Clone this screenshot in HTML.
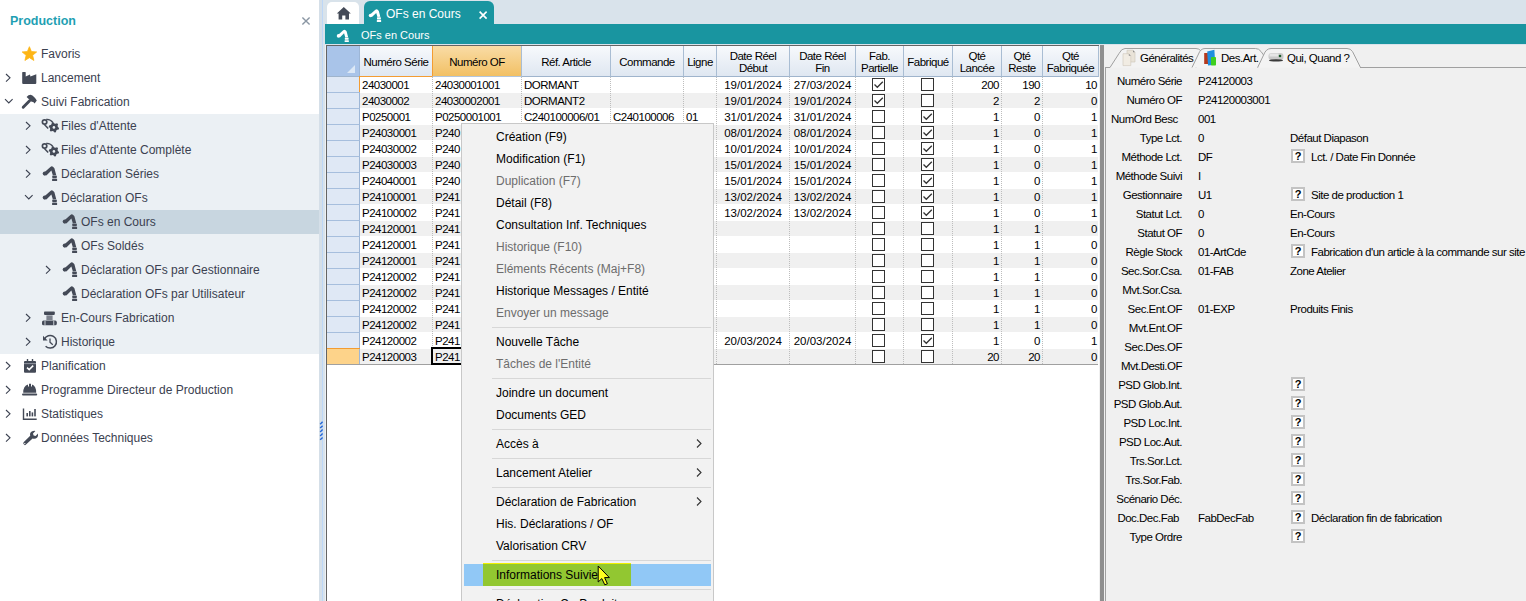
<!DOCTYPE html><html><head><meta charset="utf-8"><style>
*{box-sizing:border-box;margin:0;padding:0}
html,body{width:1526px;height:601px;overflow:hidden;background:#fff;position:relative;font-family:"Liberation Sans",sans-serif}
.abs{position:absolute}
.sb{position:absolute;left:0;top:0;width:319px;height:601px;background:#fff}
.sbt{position:absolute;left:10px;top:14px;font:bold 12.5px "Liberation Sans",sans-serif;color:#1f9fb3}
.it{position:absolute;height:24px;line-height:24px;font-size:12px;color:#3b4150;white-space:nowrap}
.chev{position:absolute;width:6px;height:6px;border-right:1.5px solid #3b4150;border-bottom:1.5px solid #3b4150}
.ico{position:absolute}
.g{position:absolute;font-size:11.5px;letter-spacing:-0.5px;color:#000;white-space:nowrap;line-height:16px}
.hd{position:absolute;top:46px;height:31px;background:linear-gradient(#f7f9fc,#dfe7f1);border-right:1px solid #a9bdd3;border-bottom:1px solid #9fb4cc;font-size:11.5px;letter-spacing:-0.5px;color:#000;text-align:center;display:flex;align-items:center;justify-content:center;line-height:12px;padding-top:1px}
.mi{position:absolute;left:496px;font-size:12px;color:#000;white-space:nowrap;line-height:16px}
.mi.d{color:#6d6d6d}
.sep{position:absolute;left:492px;width:219px;height:1px;background:#d7d7d7}
.fl{position:absolute;font-size:11.5px;letter-spacing:-0.5px;color:#000;white-space:nowrap;line-height:14px}
.q{position:absolute;width:14px;height:14px;border:2px solid #c3c3c3;background:#fff;font:bold 11px "Liberation Sans",sans-serif;text-align:center;line-height:10px;color:#000}
</style></head><body>
<div class="sb">
<div class="sbt">Production</div>
<svg class="abs" style="left:300px;top:15px" width="12" height="12"><path d="M2.4 2.4 L9.6 9.6 M9.6 2.4 L2.4 9.6" stroke="#8a96a3" stroke-width="1.4"/></svg>
<div class="abs" style="left:0;top:114px;width:319px;height:240px;background:#ebf0f4"></div>
<div class="abs" style="left:0;top:210px;width:319px;height:24px;background:#c8d6e0"></div>
<div class="it" style="left:41px;top:42px">Favoris</div>
<div class="it" style="left:41px;top:66px">Lancement</div>
<div class="it" style="left:41px;top:90px">Suivi Fabrication</div>
<div class="it" style="left:61px;top:114px">Files d'Attente</div>
<div class="it" style="left:61px;top:138px">Files d'Attente Complète</div>
<div class="it" style="left:61px;top:162px">Déclaration Séries</div>
<div class="it" style="left:61px;top:186px">Déclaration OFs</div>
<div class="it" style="left:81px;top:210px">OFs en Cours</div>
<div class="it" style="left:81px;top:234px">OFs Soldés</div>
<div class="it" style="left:81px;top:258px">Déclaration OFs par Gestionnaire</div>
<div class="it" style="left:81px;top:282px">Déclaration OFs par Utilisateur</div>
<div class="it" style="left:61px;top:306px">En-Cours Fabrication</div>
<div class="it" style="left:61px;top:330px">Historique</div>
<div class="it" style="left:41px;top:354px">Planification</div>
<div class="it" style="left:41px;top:378px">Programme Directeur de Production</div>
<div class="it" style="left:41px;top:402px">Statistiques</div>
<div class="it" style="left:41px;top:426px">Données Techniques</div>
</div>
<svg class="abs" style="left:0;top:0" width="319" height="601"><polygon points="29.40,46.70 31.40,51.55 36.63,51.95 32.63,55.35 33.87,60.45 29.40,57.70 24.93,60.45 26.17,55.35 22.17,51.95 27.40,51.55" fill="#fdb515" stroke="#fdb515" stroke-width="0.8" stroke-linejoin="round"/><path d="M22.2 72.6 Q22.2 72 22.8 72 L25.2 72 Q25.7 72 25.7 72.6 L25.7 76.6 L30 74.6 L30.4 76.6 L36.3 74.2 L36.3 83 Q36.3 84.1 35.2 84.1 L23.3 84.1 Q22.2 84.1 22.2 83 Z" fill="#444a57"/><line x1="23.2" y1="107.2" x2="29.6" y2="100.8" stroke="#444a57" stroke-width="2.9" stroke-linecap="round"/><path d="M26.6 96.9 Q28.6 94.6 31.2 94.9 Q33.6 95.6 36.8 100.4 L34.6 103.4 L33.2 102 L31.6 101.8 L28.2 98.6 Z" fill="#444a57"/><g transform="translate(0,0)"><circle cx="44.6" cy="122" r="2.2" fill="none" stroke="#444a57" stroke-width="1.7"/><path d="M46.2 119.4 Q50.4 119 53 122.6" fill="none" stroke="#444a57" stroke-width="1.4"/><line x1="44.4" y1="124.4" x2="48.2" y2="128.4" stroke="#444a57" stroke-width="1.5"/><polygon points="59.06,128.08 58.70,129.39 57.07,129.84 56.34,130.57 55.89,132.20 54.58,132.56 53.38,131.37 52.37,131.10 50.73,131.53 49.77,130.57 50.20,128.93 49.93,127.92 48.74,126.72 49.10,125.41 50.73,124.96 51.46,124.23 51.91,122.60 53.22,122.24 54.42,123.43 55.43,123.70 57.07,123.27 58.03,124.23 57.60,125.87 57.87,126.88" fill="#444a57"/><circle cx="53.9" cy="127.4" r="1.3" fill="#ebf0f4"/></g><g transform="translate(0,24)"><circle cx="44.6" cy="122" r="2.2" fill="none" stroke="#444a57" stroke-width="1.7"/><path d="M46.2 119.4 Q50.4 119 53 122.6" fill="none" stroke="#444a57" stroke-width="1.4"/><line x1="44.4" y1="124.4" x2="48.2" y2="128.4" stroke="#444a57" stroke-width="1.5"/><polygon points="59.06,128.08 58.70,129.39 57.07,129.84 56.34,130.57 55.89,132.20 54.58,132.56 53.38,131.37 52.37,131.10 50.73,131.53 49.77,130.57 50.20,128.93 49.93,127.92 48.74,126.72 49.10,125.41 50.73,124.96 51.46,124.23 51.91,122.60 53.22,122.24 54.42,123.43 55.43,123.70 57.07,123.27 58.03,124.23 57.60,125.87 57.87,126.88" fill="#444a57"/><circle cx="53.9" cy="127.4" r="1.3" fill="#ebf0f4"/></g><g transform="translate(43,166)" fill="#444a57" stroke="none">
<circle cx="1.8" cy="7.6" r="2.1"/>
<path d="M1.2 6.4 L7.4 0.9 Q8.8 -0.2 10.2 0.9 L11.4 2.2 L13.2 9 L9.8 9.2 L8.4 4.6 L3.4 9.4 Z"/>
<rect x="9.3" y="9.6" width="4.5" height="2.6" rx="0.6"/>
<rect x="9.1" y="12.8" width="5" height="2.2" rx="0.3"/>
</g><g transform="translate(43,190)" fill="#444a57" stroke="none">
<circle cx="1.8" cy="7.6" r="2.1"/>
<path d="M1.2 6.4 L7.4 0.9 Q8.8 -0.2 10.2 0.9 L11.4 2.2 L13.2 9 L9.8 9.2 L8.4 4.6 L3.4 9.4 Z"/>
<rect x="9.3" y="9.6" width="4.5" height="2.6" rx="0.6"/>
<rect x="9.1" y="12.8" width="5" height="2.2" rx="0.3"/>
</g><g transform="translate(63,214)" fill="#444a57" stroke="none">
<circle cx="1.8" cy="7.6" r="2.1"/>
<path d="M1.2 6.4 L7.4 0.9 Q8.8 -0.2 10.2 0.9 L11.4 2.2 L13.2 9 L9.8 9.2 L8.4 4.6 L3.4 9.4 Z"/>
<rect x="9.3" y="9.6" width="4.5" height="2.6" rx="0.6"/>
<rect x="9.1" y="12.8" width="5" height="2.2" rx="0.3"/>
</g><g transform="translate(63,238)" fill="#444a57" stroke="none">
<circle cx="1.8" cy="7.6" r="2.1"/>
<path d="M1.2 6.4 L7.4 0.9 Q8.8 -0.2 10.2 0.9 L11.4 2.2 L13.2 9 L9.8 9.2 L8.4 4.6 L3.4 9.4 Z"/>
<rect x="9.3" y="9.6" width="4.5" height="2.6" rx="0.6"/>
<rect x="9.1" y="12.8" width="5" height="2.2" rx="0.3"/>
</g><g transform="translate(63,262)" fill="#444a57" stroke="none">
<circle cx="1.8" cy="7.6" r="2.1"/>
<path d="M1.2 6.4 L7.4 0.9 Q8.8 -0.2 10.2 0.9 L11.4 2.2 L13.2 9 L9.8 9.2 L8.4 4.6 L3.4 9.4 Z"/>
<rect x="9.3" y="9.6" width="4.5" height="2.6" rx="0.6"/>
<rect x="9.1" y="12.8" width="5" height="2.2" rx="0.3"/>
</g><g transform="translate(63,286)" fill="#444a57" stroke="none">
<circle cx="1.8" cy="7.6" r="2.1"/>
<path d="M1.2 6.4 L7.4 0.9 Q8.8 -0.2 10.2 0.9 L11.4 2.2 L13.2 9 L9.8 9.2 L8.4 4.6 L3.4 9.4 Z"/>
<rect x="9.3" y="9.6" width="4.5" height="2.6" rx="0.6"/>
<rect x="9.1" y="12.8" width="5" height="2.2" rx="0.3"/>
</g><rect x="44" y="311.6" width="10.8" height="3.3" rx="0.8" fill="#444a57"/><rect x="46.4" y="315.4" width="6.2" height="4.6" fill="#7d828d"/><rect x="42" y="320.6" width="14.8" height="4.7" rx="1.6" fill="#444a57"/><rect x="44.6" y="320.6" width="0.8" height="4.7" fill="#ebf0f4"/><rect x="53.4" y="320.6" width="0.8" height="4.7" fill="#ebf0f4"/><path d="M44.4 339.2 A6.3 6.3 0 1 1 45.6 346.2" fill="none" stroke="#444a57" stroke-width="1.5"/><polygon points="43,335.8 43,340.6 47.6,340.6" fill="#444a57"/><path d="M50 338.5 L50 342.2 L52.8 344.8" fill="none" stroke="#444a57" stroke-width="1.3"/><rect x="24" y="361" width="12" height="11.8" rx="1" fill="#444a57"/><rect x="26.8" y="359" width="1.4" height="3" fill="#444a57"/><rect x="31.8" y="359" width="1.4" height="3" fill="#444a57"/><rect x="24" y="363.2" width="12" height="0.9" fill="#9ba0aa"/><path d="M27 367.6 L29.2 369.6 L33.2 365.6" fill="none" stroke="#fff" stroke-width="1.5"/><path d="M23.2 392.8 Q23.2 385.5 28 384.4 L28 386.5 L29 386.5 L29 383.8 L31 383.8 L31 386.5 L32 386.5 L32 384.4 Q36.2 385.5 36.2 392.8 Z" fill="#444a57"/><rect x="22" y="393.6" width="15.2" height="2" rx="1" fill="#444a57"/><path d="M23.5 408.4 L23.5 419.3 L36.7 419.3" fill="none" stroke="#444a57" stroke-width="1.4"/><rect x="26.4" y="413" width="1.6" height="3.4" fill="#444a57"/><rect x="29" y="411" width="1.6" height="5.4" fill="#444a57"/><rect x="31.6" y="412.4" width="1.6" height="4" fill="#444a57"/><rect x="34.2" y="409" width="1.6" height="7.4" fill="#444a57"/><path d="M24.2 444.8 Q22.6 443.6 23.6 442.2 L30.2 435.8 Q29.4 432.4 32.2 431.2 Q34 430.6 35.4 431 L33 433.4 L33.6 435.4 L35.6 436 L38 433.6 Q38.4 436 37.2 437.4 Q35.4 439.2 32.6 438.4 L26 444.6 Q25 445.6 24.2 444.8 Z" fill="#444a57"/><circle cx="24.8" cy="443.6" r="0.7" fill="#fff"/><path d="M6 74 L10 77.8 L6 81.6" fill="none" stroke="#3b4150" stroke-width="1.1"/><path d="M5 99.2 L8.8 103 L12.6 99.2" fill="none" stroke="#3b4150" stroke-width="1.1"/><path d="M26 122 L30 125.8 L26 129.6" fill="none" stroke="#3b4150" stroke-width="1.1"/><path d="M26 146 L30 149.8 L26 153.6" fill="none" stroke="#3b4150" stroke-width="1.1"/><path d="M26 170 L30 173.8 L26 177.6" fill="none" stroke="#3b4150" stroke-width="1.1"/><path d="M25 195.2 L28.8 199 L32.6 195.2" fill="none" stroke="#3b4150" stroke-width="1.1"/><path d="M46 266 L50 269.8 L46 273.6" fill="none" stroke="#3b4150" stroke-width="1.1"/><path d="M26 314 L30 317.8 L26 321.6" fill="none" stroke="#3b4150" stroke-width="1.1"/><path d="M26 338 L30 341.8 L26 345.6" fill="none" stroke="#3b4150" stroke-width="1.1"/><path d="M6 362 L10 365.8 L6 369.6" fill="none" stroke="#3b4150" stroke-width="1.1"/><path d="M6 386 L10 389.8 L6 393.6" fill="none" stroke="#3b4150" stroke-width="1.1"/><path d="M6 410 L10 413.8 L6 417.6" fill="none" stroke="#3b4150" stroke-width="1.1"/><path d="M6 434 L10 437.8 L6 441.6" fill="none" stroke="#3b4150" stroke-width="1.1"/></svg>
<div class="abs" style="left:319px;top:0;width:3px;height:601px;background:#d5dfe8"></div>
<div class="abs" style="left:322px;top:0;width:1px;height:601px;background:#bdd7f7"></div>
<div class="abs" style="left:323px;top:0;width:1203px;height:601px;background:#d9e3eb"></div>
<svg class="abs" style="left:318px;top:418px" width="6" height="26"><path d="M2.2 6.2 L4.6 3.8" stroke="#2266d8" stroke-width="1.4"/><path d="M2.2 10.1 L4.6 7.699999999999999" stroke="#2266d8" stroke-width="1.4"/><path d="M2.2 14.0 L4.6 11.6" stroke="#2266d8" stroke-width="1.4"/><path d="M2.2 17.9 L4.6 15.5" stroke="#2266d8" stroke-width="1.4"/><path d="M2.2 21.8 L4.6 19.4" stroke="#2266d8" stroke-width="1.4"/></svg>
<div class="abs" style="left:327px;top:2px;width:32px;height:22px;background:#fff;border-radius:5px 5px 0 0"></div>
<div class="abs" style="left:364px;top:1px;width:130px;height:23px;background:#1995a0;border-radius:6px 6px 0 0"></div>
<div class="abs" style="left:386px;top:6px;font-size:12px;color:#fff;line-height:16px">OFs en Cours</div>
<div class="abs" style="left:325px;top:24px;width:1201px;height:20px;background:#1995a0"></div>
<div class="abs" style="left:361px;top:28px;font-size:11px;color:#fff;line-height:14px">OFs en Cours</div>
<svg class="abs" style="left:0;top:0" width="520" height="50"><path d="M479.6 11.6 L486.6 18.6 M486.6 11.6 L479.6 18.6" stroke="#fff" stroke-width="1.6"/><path d="M343.8 7 L350.8 13.4 L349 13.4 L349 19.4 L345.4 19.4 L345.4 15.6 L342.2 15.6 L342.2 19.4 L338.6 19.4 L338.6 13.4 L336.8 13.4 Z" fill="#444a57"/><g transform="translate(369,9) scale(0.86)"><g transform="translate(0,0)" fill="#fff" stroke="none">
<circle cx="1.8" cy="7.6" r="2.1"/>
<path d="M1.2 6.4 L7.4 0.9 Q8.8 -0.2 10.2 0.9 L11.4 2.2 L13.2 9 L9.8 9.2 L8.4 4.6 L3.4 9.4 Z"/>
<rect x="9.3" y="9.6" width="4.5" height="2.6" rx="0.6"/>
<rect x="9.1" y="12.8" width="5" height="2.2" rx="0.3"/>
</g></g><g transform="translate(337,29.5) scale(0.84)"><g transform="translate(0,0)" fill="#fff" stroke="none">
<circle cx="1.8" cy="7.6" r="2.1"/>
<path d="M1.2 6.4 L7.4 0.9 Q8.8 -0.2 10.2 0.9 L11.4 2.2 L13.2 9 L9.8 9.2 L8.4 4.6 L3.4 9.4 Z"/>
<rect x="9.3" y="9.6" width="4.5" height="2.6" rx="0.6"/>
<rect x="9.1" y="12.8" width="5" height="2.2" rx="0.3"/>
</g></g></svg>
<div class="abs" style="left:325px;top:45px;width:1px;height:556px;background:#eef1f4"></div>
<div class="abs" style="left:326px;top:45px;width:774px;height:556px;background:#fff;border:1px solid #646464;border-bottom:none"></div>
<div class="abs" style="left:327px;top:46px;width:33px;height:31px;background:#a9c4e9;border-right:1px solid #9db6d6;border-bottom:1px solid #9fb4cc"></div>
<div class="abs" style="left:347px;top:65px;width:0;height:0;border-left:8px solid transparent;border-bottom:8px solid #dce8f6"></div>
<div class="hd" style="left:360px;width:73px;">Numéro Série</div>
<div class="hd" style="left:432px;width:90px;background:linear-gradient(#f9dca6,#f2c064);border-right:1px solid #a9bdd3;border-left:1px solid #f39c32;border-bottom:1px solid #b3c6dc">Numéro OF</div>
<div class="hd" style="left:522px;width:89px;">Réf. Article</div>
<div class="hd" style="left:611px;width:73px;">Commande</div>
<div class="hd" style="left:684px;width:33px;">Ligne</div>
<div class="hd" style="left:717px;width:73px;">Date Réel<br>Début</div>
<div class="hd" style="left:790px;width:66px;">Date Réel<br>Fin</div>
<div class="hd" style="left:856px;width:48px;">Fab.<br>Partielle</div>
<div class="hd" style="left:904px;width:49px;">Fabriqué</div>
<div class="hd" style="left:953px;width:49px;">Qté<br>Lancée</div>
<div class="hd" style="left:1002px;width:41px;">Qté<br>Reste</div>
<div class="hd" style="left:1043px;width:56px;">Qté<br>Fabriquée</div>
<div class="abs" style="left:360px;top:77px;width:738px;height:15px;background:#fff"></div>
<div class="abs" style="left:327px;top:77px;width:33px;height:16px;background:#dfe8f5;border-right:1px solid #9db6d6;border-bottom:1px solid #a6bedd"></div>
<div class="abs" style="left:360px;top:93px;width:738px;height:15px;background:#f0f0f0"></div>
<div class="abs" style="left:327px;top:93px;width:33px;height:16px;background:#dfe8f5;border-right:1px solid #9db6d6;border-bottom:1px solid #a6bedd"></div>
<div class="abs" style="left:360px;top:109px;width:738px;height:15px;background:#fff"></div>
<div class="abs" style="left:327px;top:109px;width:33px;height:16px;background:#dfe8f5;border-right:1px solid #9db6d6;border-bottom:1px solid #a6bedd"></div>
<div class="abs" style="left:360px;top:125px;width:738px;height:15px;background:#f0f0f0"></div>
<div class="abs" style="left:327px;top:125px;width:33px;height:16px;background:#dfe8f5;border-right:1px solid #9db6d6;border-bottom:1px solid #a6bedd"></div>
<div class="abs" style="left:360px;top:141px;width:738px;height:15px;background:#fff"></div>
<div class="abs" style="left:327px;top:141px;width:33px;height:16px;background:#dfe8f5;border-right:1px solid #9db6d6;border-bottom:1px solid #a6bedd"></div>
<div class="abs" style="left:360px;top:157px;width:738px;height:15px;background:#f0f0f0"></div>
<div class="abs" style="left:327px;top:157px;width:33px;height:16px;background:#dfe8f5;border-right:1px solid #9db6d6;border-bottom:1px solid #a6bedd"></div>
<div class="abs" style="left:360px;top:173px;width:738px;height:15px;background:#fff"></div>
<div class="abs" style="left:327px;top:173px;width:33px;height:16px;background:#dfe8f5;border-right:1px solid #9db6d6;border-bottom:1px solid #a6bedd"></div>
<div class="abs" style="left:360px;top:189px;width:738px;height:15px;background:#f0f0f0"></div>
<div class="abs" style="left:327px;top:189px;width:33px;height:16px;background:#dfe8f5;border-right:1px solid #9db6d6;border-bottom:1px solid #a6bedd"></div>
<div class="abs" style="left:360px;top:205px;width:738px;height:15px;background:#fff"></div>
<div class="abs" style="left:327px;top:205px;width:33px;height:16px;background:#dfe8f5;border-right:1px solid #9db6d6;border-bottom:1px solid #a6bedd"></div>
<div class="abs" style="left:360px;top:221px;width:738px;height:15px;background:#f0f0f0"></div>
<div class="abs" style="left:327px;top:221px;width:33px;height:16px;background:#dfe8f5;border-right:1px solid #9db6d6;border-bottom:1px solid #a6bedd"></div>
<div class="abs" style="left:360px;top:237px;width:738px;height:15px;background:#fff"></div>
<div class="abs" style="left:327px;top:237px;width:33px;height:16px;background:#dfe8f5;border-right:1px solid #9db6d6;border-bottom:1px solid #a6bedd"></div>
<div class="abs" style="left:360px;top:253px;width:738px;height:15px;background:#f0f0f0"></div>
<div class="abs" style="left:327px;top:253px;width:33px;height:16px;background:#dfe8f5;border-right:1px solid #9db6d6;border-bottom:1px solid #a6bedd"></div>
<div class="abs" style="left:360px;top:269px;width:738px;height:15px;background:#fff"></div>
<div class="abs" style="left:327px;top:269px;width:33px;height:16px;background:#dfe8f5;border-right:1px solid #9db6d6;border-bottom:1px solid #a6bedd"></div>
<div class="abs" style="left:360px;top:285px;width:738px;height:15px;background:#f0f0f0"></div>
<div class="abs" style="left:327px;top:285px;width:33px;height:16px;background:#dfe8f5;border-right:1px solid #9db6d6;border-bottom:1px solid #a6bedd"></div>
<div class="abs" style="left:360px;top:301px;width:738px;height:15px;background:#fff"></div>
<div class="abs" style="left:327px;top:301px;width:33px;height:16px;background:#dfe8f5;border-right:1px solid #9db6d6;border-bottom:1px solid #a6bedd"></div>
<div class="abs" style="left:360px;top:317px;width:738px;height:15px;background:#f0f0f0"></div>
<div class="abs" style="left:327px;top:317px;width:33px;height:16px;background:#dfe8f5;border-right:1px solid #9db6d6;border-bottom:1px solid #a6bedd"></div>
<div class="abs" style="left:360px;top:333px;width:738px;height:15px;background:#fff"></div>
<div class="abs" style="left:327px;top:333px;width:33px;height:16px;background:#dfe8f5;border-right:1px solid #9db6d6;border-bottom:1px solid #a6bedd"></div>
<div class="abs" style="left:360px;top:349px;width:738px;height:15px;background:#f0f0f0"></div>
<div class="abs" style="left:327px;top:349px;width:33px;height:16px;background:#fdd38a;border-right:1px solid #9db6d6;border-bottom:1px solid #a6bedd"></div>
<div class="abs" style="left:432px;top:77px;width:1px;height:288px;background:repeating-linear-gradient(#bdbdbd 0 1px,transparent 1px 2px)"></div>
<div class="abs" style="left:521px;top:77px;width:1px;height:288px;background:repeating-linear-gradient(#bdbdbd 0 1px,transparent 1px 2px)"></div>
<div class="abs" style="left:610px;top:77px;width:1px;height:288px;background:repeating-linear-gradient(#bdbdbd 0 1px,transparent 1px 2px)"></div>
<div class="abs" style="left:683px;top:77px;width:1px;height:288px;background:repeating-linear-gradient(#bdbdbd 0 1px,transparent 1px 2px)"></div>
<div class="abs" style="left:716px;top:77px;width:1px;height:288px;background:repeating-linear-gradient(#bdbdbd 0 1px,transparent 1px 2px)"></div>
<div class="abs" style="left:789px;top:77px;width:1px;height:288px;background:repeating-linear-gradient(#bdbdbd 0 1px,transparent 1px 2px)"></div>
<div class="abs" style="left:855px;top:77px;width:1px;height:288px;background:repeating-linear-gradient(#bdbdbd 0 1px,transparent 1px 2px)"></div>
<div class="abs" style="left:903px;top:77px;width:1px;height:288px;background:repeating-linear-gradient(#bdbdbd 0 1px,transparent 1px 2px)"></div>
<div class="abs" style="left:952px;top:77px;width:1px;height:288px;background:repeating-linear-gradient(#bdbdbd 0 1px,transparent 1px 2px)"></div>
<div class="abs" style="left:1001px;top:77px;width:1px;height:288px;background:repeating-linear-gradient(#bdbdbd 0 1px,transparent 1px 2px)"></div>
<div class="abs" style="left:1042px;top:77px;width:1px;height:288px;background:repeating-linear-gradient(#bdbdbd 0 1px,transparent 1px 2px)"></div>
<div class="abs" style="left:327px;top:364px;width:771px;height:1px;background:#a0a0a0"></div>
<div class="g" style="left:362px;top:77px">24030001</div>
<div class="g" style="left:435px;top:77px">24030001001</div>
<div class="g" style="left:524px;top:77px">DORMANT</div>
<div class="g" style="left:717px;top:77px;width:72px;text-align:center;letter-spacing:0">19/01/2024</div>
<div class="g" style="left:790px;top:77px;width:65px;text-align:center;letter-spacing:0">27/03/2024</div>
<div class="abs" style="left:872px;top:78px;width:13px;height:13px;border:1px solid #333;background:#fff"><svg width="11" height="11" style="position:absolute;left:0;top:0"><path d="M1.5 5.5 L4.3 8.3 L9.8 2.8" stroke="#333" stroke-width="1.3" fill="none"/></svg></div>
<div class="abs" style="left:921px;top:78px;width:13px;height:13px;border:1px solid #333;background:#fff"></div>
<div class="g" style="left:953px;top:77px;width:46px;text-align:right">200</div>
<div class="g" style="left:1002px;top:77px;width:38px;text-align:right">190</div>
<div class="g" style="left:1043px;top:77px;width:54px;text-align:right">10</div>
<div class="g" style="left:362px;top:93px">24030002</div>
<div class="g" style="left:435px;top:93px">24030002001</div>
<div class="g" style="left:524px;top:93px">DORMANT2</div>
<div class="g" style="left:717px;top:93px;width:72px;text-align:center;letter-spacing:0">19/01/2024</div>
<div class="g" style="left:790px;top:93px;width:65px;text-align:center;letter-spacing:0">19/01/2024</div>
<div class="abs" style="left:872px;top:94px;width:13px;height:13px;border:1px solid #333;background:#fff"><svg width="11" height="11" style="position:absolute;left:0;top:0"><path d="M1.5 5.5 L4.3 8.3 L9.8 2.8" stroke="#333" stroke-width="1.3" fill="none"/></svg></div>
<div class="abs" style="left:921px;top:94px;width:13px;height:13px;border:1px solid #333;background:#fff"></div>
<div class="g" style="left:953px;top:93px;width:46px;text-align:right">2</div>
<div class="g" style="left:1002px;top:93px;width:38px;text-align:right">2</div>
<div class="g" style="left:1043px;top:93px;width:54px;text-align:right">0</div>
<div class="g" style="left:362px;top:109px">P0250001</div>
<div class="g" style="left:435px;top:109px">P0250001001</div>
<div class="g" style="left:524px;top:109px">C240100006/01</div>
<div class="g" style="left:613px;top:109px">C240100006</div>
<div class="g" style="left:686px;top:109px">01</div>
<div class="g" style="left:717px;top:109px;width:72px;text-align:center;letter-spacing:0">31/01/2024</div>
<div class="g" style="left:790px;top:109px;width:65px;text-align:center;letter-spacing:0">31/01/2024</div>
<div class="abs" style="left:872px;top:110px;width:13px;height:13px;border:1px solid #333;background:#fff"></div>
<div class="abs" style="left:921px;top:110px;width:13px;height:13px;border:1px solid #333;background:#fff"><svg width="11" height="11" style="position:absolute;left:0;top:0"><path d="M1.5 5.5 L4.3 8.3 L9.8 2.8" stroke="#333" stroke-width="1.3" fill="none"/></svg></div>
<div class="g" style="left:953px;top:109px;width:46px;text-align:right">1</div>
<div class="g" style="left:1002px;top:109px;width:38px;text-align:right">0</div>
<div class="g" style="left:1043px;top:109px;width:54px;text-align:right">1</div>
<div class="g" style="left:362px;top:125px">P24030001</div>
<div class="g" style="left:435px;top:125px">P240</div>
<div class="g" style="left:717px;top:125px;width:72px;text-align:center;letter-spacing:0">08/01/2024</div>
<div class="g" style="left:790px;top:125px;width:65px;text-align:center;letter-spacing:0">08/01/2024</div>
<div class="abs" style="left:872px;top:126px;width:13px;height:13px;border:1px solid #333;background:#fff"></div>
<div class="abs" style="left:921px;top:126px;width:13px;height:13px;border:1px solid #333;background:#fff"><svg width="11" height="11" style="position:absolute;left:0;top:0"><path d="M1.5 5.5 L4.3 8.3 L9.8 2.8" stroke="#333" stroke-width="1.3" fill="none"/></svg></div>
<div class="g" style="left:953px;top:125px;width:46px;text-align:right">1</div>
<div class="g" style="left:1002px;top:125px;width:38px;text-align:right">0</div>
<div class="g" style="left:1043px;top:125px;width:54px;text-align:right">1</div>
<div class="g" style="left:362px;top:141px">P24030002</div>
<div class="g" style="left:435px;top:141px">P240</div>
<div class="g" style="left:717px;top:141px;width:72px;text-align:center;letter-spacing:0">10/01/2024</div>
<div class="g" style="left:790px;top:141px;width:65px;text-align:center;letter-spacing:0">10/01/2024</div>
<div class="abs" style="left:872px;top:142px;width:13px;height:13px;border:1px solid #333;background:#fff"></div>
<div class="abs" style="left:921px;top:142px;width:13px;height:13px;border:1px solid #333;background:#fff"><svg width="11" height="11" style="position:absolute;left:0;top:0"><path d="M1.5 5.5 L4.3 8.3 L9.8 2.8" stroke="#333" stroke-width="1.3" fill="none"/></svg></div>
<div class="g" style="left:953px;top:141px;width:46px;text-align:right">1</div>
<div class="g" style="left:1002px;top:141px;width:38px;text-align:right">0</div>
<div class="g" style="left:1043px;top:141px;width:54px;text-align:right">1</div>
<div class="g" style="left:362px;top:157px">P24030003</div>
<div class="g" style="left:435px;top:157px">P240</div>
<div class="g" style="left:717px;top:157px;width:72px;text-align:center;letter-spacing:0">15/01/2024</div>
<div class="g" style="left:790px;top:157px;width:65px;text-align:center;letter-spacing:0">15/01/2024</div>
<div class="abs" style="left:872px;top:158px;width:13px;height:13px;border:1px solid #333;background:#fff"></div>
<div class="abs" style="left:921px;top:158px;width:13px;height:13px;border:1px solid #333;background:#fff"><svg width="11" height="11" style="position:absolute;left:0;top:0"><path d="M1.5 5.5 L4.3 8.3 L9.8 2.8" stroke="#333" stroke-width="1.3" fill="none"/></svg></div>
<div class="g" style="left:953px;top:157px;width:46px;text-align:right">1</div>
<div class="g" style="left:1002px;top:157px;width:38px;text-align:right">0</div>
<div class="g" style="left:1043px;top:157px;width:54px;text-align:right">1</div>
<div class="g" style="left:362px;top:173px">P24040001</div>
<div class="g" style="left:435px;top:173px">P240</div>
<div class="g" style="left:717px;top:173px;width:72px;text-align:center;letter-spacing:0">15/01/2024</div>
<div class="g" style="left:790px;top:173px;width:65px;text-align:center;letter-spacing:0">15/01/2024</div>
<div class="abs" style="left:872px;top:174px;width:13px;height:13px;border:1px solid #333;background:#fff"></div>
<div class="abs" style="left:921px;top:174px;width:13px;height:13px;border:1px solid #333;background:#fff"><svg width="11" height="11" style="position:absolute;left:0;top:0"><path d="M1.5 5.5 L4.3 8.3 L9.8 2.8" stroke="#333" stroke-width="1.3" fill="none"/></svg></div>
<div class="g" style="left:953px;top:173px;width:46px;text-align:right">1</div>
<div class="g" style="left:1002px;top:173px;width:38px;text-align:right">0</div>
<div class="g" style="left:1043px;top:173px;width:54px;text-align:right">1</div>
<div class="g" style="left:362px;top:189px">P24100001</div>
<div class="g" style="left:435px;top:189px">P241</div>
<div class="g" style="left:717px;top:189px;width:72px;text-align:center;letter-spacing:0">13/02/2024</div>
<div class="g" style="left:790px;top:189px;width:65px;text-align:center;letter-spacing:0">13/02/2024</div>
<div class="abs" style="left:872px;top:190px;width:13px;height:13px;border:1px solid #333;background:#fff"></div>
<div class="abs" style="left:921px;top:190px;width:13px;height:13px;border:1px solid #333;background:#fff"><svg width="11" height="11" style="position:absolute;left:0;top:0"><path d="M1.5 5.5 L4.3 8.3 L9.8 2.8" stroke="#333" stroke-width="1.3" fill="none"/></svg></div>
<div class="g" style="left:953px;top:189px;width:46px;text-align:right">1</div>
<div class="g" style="left:1002px;top:189px;width:38px;text-align:right">0</div>
<div class="g" style="left:1043px;top:189px;width:54px;text-align:right">1</div>
<div class="g" style="left:362px;top:205px">P24100002</div>
<div class="g" style="left:435px;top:205px">P241</div>
<div class="g" style="left:717px;top:205px;width:72px;text-align:center;letter-spacing:0">13/02/2024</div>
<div class="g" style="left:790px;top:205px;width:65px;text-align:center;letter-spacing:0">13/02/2024</div>
<div class="abs" style="left:872px;top:206px;width:13px;height:13px;border:1px solid #333;background:#fff"></div>
<div class="abs" style="left:921px;top:206px;width:13px;height:13px;border:1px solid #333;background:#fff"><svg width="11" height="11" style="position:absolute;left:0;top:0"><path d="M1.5 5.5 L4.3 8.3 L9.8 2.8" stroke="#333" stroke-width="1.3" fill="none"/></svg></div>
<div class="g" style="left:953px;top:205px;width:46px;text-align:right">1</div>
<div class="g" style="left:1002px;top:205px;width:38px;text-align:right">0</div>
<div class="g" style="left:1043px;top:205px;width:54px;text-align:right">1</div>
<div class="g" style="left:362px;top:221px">P24120001</div>
<div class="g" style="left:435px;top:221px">P241</div>
<div class="abs" style="left:872px;top:222px;width:13px;height:13px;border:1px solid #333;background:#fff"></div>
<div class="abs" style="left:921px;top:222px;width:13px;height:13px;border:1px solid #333;background:#fff"></div>
<div class="g" style="left:953px;top:221px;width:46px;text-align:right">1</div>
<div class="g" style="left:1002px;top:221px;width:38px;text-align:right">1</div>
<div class="g" style="left:1043px;top:221px;width:54px;text-align:right">0</div>
<div class="g" style="left:362px;top:237px">P24120001</div>
<div class="g" style="left:435px;top:237px">P241</div>
<div class="abs" style="left:872px;top:238px;width:13px;height:13px;border:1px solid #333;background:#fff"></div>
<div class="abs" style="left:921px;top:238px;width:13px;height:13px;border:1px solid #333;background:#fff"></div>
<div class="g" style="left:953px;top:237px;width:46px;text-align:right">1</div>
<div class="g" style="left:1002px;top:237px;width:38px;text-align:right">1</div>
<div class="g" style="left:1043px;top:237px;width:54px;text-align:right">0</div>
<div class="g" style="left:362px;top:253px">P24120001</div>
<div class="g" style="left:435px;top:253px">P241</div>
<div class="abs" style="left:872px;top:254px;width:13px;height:13px;border:1px solid #333;background:#fff"></div>
<div class="abs" style="left:921px;top:254px;width:13px;height:13px;border:1px solid #333;background:#fff"></div>
<div class="g" style="left:953px;top:253px;width:46px;text-align:right">1</div>
<div class="g" style="left:1002px;top:253px;width:38px;text-align:right">1</div>
<div class="g" style="left:1043px;top:253px;width:54px;text-align:right">0</div>
<div class="g" style="left:362px;top:269px">P24120002</div>
<div class="g" style="left:435px;top:269px">P241</div>
<div class="abs" style="left:872px;top:270px;width:13px;height:13px;border:1px solid #333;background:#fff"></div>
<div class="abs" style="left:921px;top:270px;width:13px;height:13px;border:1px solid #333;background:#fff"></div>
<div class="g" style="left:953px;top:269px;width:46px;text-align:right">1</div>
<div class="g" style="left:1002px;top:269px;width:38px;text-align:right">1</div>
<div class="g" style="left:1043px;top:269px;width:54px;text-align:right">0</div>
<div class="g" style="left:362px;top:285px">P24120002</div>
<div class="g" style="left:435px;top:285px">P241</div>
<div class="abs" style="left:872px;top:286px;width:13px;height:13px;border:1px solid #333;background:#fff"></div>
<div class="abs" style="left:921px;top:286px;width:13px;height:13px;border:1px solid #333;background:#fff"></div>
<div class="g" style="left:953px;top:285px;width:46px;text-align:right">1</div>
<div class="g" style="left:1002px;top:285px;width:38px;text-align:right">1</div>
<div class="g" style="left:1043px;top:285px;width:54px;text-align:right">0</div>
<div class="g" style="left:362px;top:301px">P24120002</div>
<div class="g" style="left:435px;top:301px">P241</div>
<div class="abs" style="left:872px;top:302px;width:13px;height:13px;border:1px solid #333;background:#fff"></div>
<div class="abs" style="left:921px;top:302px;width:13px;height:13px;border:1px solid #333;background:#fff"></div>
<div class="g" style="left:953px;top:301px;width:46px;text-align:right">1</div>
<div class="g" style="left:1002px;top:301px;width:38px;text-align:right">1</div>
<div class="g" style="left:1043px;top:301px;width:54px;text-align:right">0</div>
<div class="g" style="left:362px;top:317px">P24120002</div>
<div class="g" style="left:435px;top:317px">P241</div>
<div class="abs" style="left:872px;top:318px;width:13px;height:13px;border:1px solid #333;background:#fff"></div>
<div class="abs" style="left:921px;top:318px;width:13px;height:13px;border:1px solid #333;background:#fff"></div>
<div class="g" style="left:953px;top:317px;width:46px;text-align:right">1</div>
<div class="g" style="left:1002px;top:317px;width:38px;text-align:right">1</div>
<div class="g" style="left:1043px;top:317px;width:54px;text-align:right">0</div>
<div class="g" style="left:362px;top:333px">P24120002</div>
<div class="g" style="left:435px;top:333px">P241</div>
<div class="g" style="left:717px;top:333px;width:72px;text-align:center;letter-spacing:0">20/03/2024</div>
<div class="g" style="left:790px;top:333px;width:65px;text-align:center;letter-spacing:0">20/03/2024</div>
<div class="abs" style="left:872px;top:334px;width:13px;height:13px;border:1px solid #333;background:#fff"></div>
<div class="abs" style="left:921px;top:334px;width:13px;height:13px;border:1px solid #333;background:#fff"><svg width="11" height="11" style="position:absolute;left:0;top:0"><path d="M1.5 5.5 L4.3 8.3 L9.8 2.8" stroke="#333" stroke-width="1.3" fill="none"/></svg></div>
<div class="g" style="left:953px;top:333px;width:46px;text-align:right">1</div>
<div class="g" style="left:1002px;top:333px;width:38px;text-align:right">0</div>
<div class="g" style="left:1043px;top:333px;width:54px;text-align:right">1</div>
<div class="g" style="left:362px;top:349px">P24120003</div>
<div class="g" style="left:435px;top:349px">P241</div>
<div class="abs" style="left:872px;top:350px;width:13px;height:13px;border:1px solid #333;background:#fff"></div>
<div class="abs" style="left:921px;top:350px;width:13px;height:13px;border:1px solid #333;background:#fff"></div>
<div class="g" style="left:953px;top:349px;width:46px;text-align:right">20</div>
<div class="g" style="left:1002px;top:349px;width:38px;text-align:right">20</div>
<div class="g" style="left:1043px;top:349px;width:54px;text-align:right">0</div>
<div class="abs" style="left:359px;top:76px;width:73px;height:1px;background:#f39c32"></div>
<div class="abs" style="left:359px;top:76px;width:1px;height:16px;background:#f39c32"></div>
<div class="abs" style="left:327px;top:348px;width:33px;height:1px;background:#f39c32"></div>
<div class="abs" style="left:431px;top:347px;width:92px;height:18px;border:2px solid #000"></div>
<div class="abs" style="left:1099px;top:45px;width:1px;height:556px;background:#f0f0f0"></div>
<div class="abs" style="left:1100px;top:45px;width:4px;height:556px;background:#8f8f8f"></div>
<div class="abs" style="left:1104px;top:45px;width:422px;height:556px;background:#f0f0f0"></div>
<div class="abs" style="left:1105px;top:67px;width:421px;height:534px;border-left:1px solid #a0a0a0"></div>
<svg class="abs" style="left:1104px;top:45px" width="422" height="24">
<path d="M6 22.5 L15 8.5 Q17.5 3.5 21 3.5 L92 3.5 Q95 3.5 97 6 L99 9 L92 22.5" fill="#f3f3f3" stroke="#a0a0a0" stroke-width="1"/>
<path d="M88 22.5 L94.5 9 Q96.5 3.5 101 3.5 L151.5 3.5 Q155 3.5 157 6.5 L161 12 L154 22.5" fill="#f3f3f3" stroke="#a0a0a0" stroke-width="1"/>
<path d="M153.6 22.5 L159.6 10 Q162 3.5 167 3.5 L243 3.5 Q246.5 3.5 248.5 6.5 L256.5 22.5" fill="#f3f3f3" stroke="#a0a0a0" stroke-width="1"/>
<line x1="256" y1="22.5" x2="422" y2="22.5" stroke="#a0a0a0" stroke-width="1"/><line x1="2" y1="22.5" x2="6" y2="22.5" stroke="#a0a0a0" stroke-width="1"/>
<g>
<path d="M23 5.2 L29 5.2 L31 7.2 L31 17 L23 17 Z" fill="#e9e3d8" stroke="#cfc6b8" stroke-width="0.6"/>
<path d="M29 5.2 L29 7.2 L31 7.2" fill="#8c8c8c"/>
<path d="M19 8.7 L24.8 8.7 L26.8 10.7 L26.8 20.6 L19 20.6 Z" fill="#f1ece3" stroke="#cfc6b8" stroke-width="0.6"/>
<path d="M24.8 8.7 L24.8 10.7 L26.8 10.7" fill="#8c8c8c"/>
</g>
<g>
<rect x="100.2" y="8" width="4" height="11" fill="#b5391c"/>
<path d="M103.2 6.5 L110.4 4.8 L111.2 19.8 L104 20.4 Z" fill="#1e8fe0"/>
<rect x="107" y="12" width="5" height="8.5" rx="0.8" fill="#3fcf20"/>
</g>
<g>
<rect x="164.5" y="8" width="15" height="7" rx="3" fill="#c9c9c9"/>
<rect x="165.5" y="8.5" width="9" height="3" fill="#e6e6e6"/>
<ellipse cx="172" cy="15.4" rx="7" ry="1.2" fill="#3a3a3a"/>
<circle cx="176" cy="11" r="1.3" fill="#1a5a2a"/>
</g>
</svg>
<div class="fl" style="left:1140px;top:51px">Généralités</div>
<div class="fl" style="left:1221px;top:51px">Des.Art.</div>
<div class="fl" style="left:1287px;top:51px">Qui, Quand ?</div>
<div class="fl" style="left:1060px;width:122px;text-align:right;top:74px">Numéro Série</div>
<div class="fl" style="left:1198px;top:74px">P24120003</div>
<div class="fl" style="left:1060px;width:122px;text-align:right;top:93px">Numéro OF</div>
<div class="fl" style="left:1198px;top:93px">P24120003001</div>
<div class="fl" style="left:1111px;top:112px">NumOrd Besc</div>
<div class="fl" style="left:1198px;top:112px">001</div>
<div class="fl" style="left:1060px;width:122px;text-align:right;top:131px">Type Lct.</div>
<div class="fl" style="left:1198px;top:131px">0</div>
<div class="fl" style="left:1290px;top:131px">Défaut Diapason</div>
<div class="fl" style="left:1060px;width:122px;text-align:right;top:150px">Méthode Lct.</div>
<div class="fl" style="left:1198px;top:150px">DF</div>
<div class="q" style="left:1291px;top:149px">?</div>
<div class="fl" style="left:1311px;top:150px">Lct. / Date Fin Donnée</div>
<div class="fl" style="left:1060px;width:122px;text-align:right;top:169px">Méthode Suivi</div>
<div class="fl" style="left:1198px;top:169px">I</div>
<div class="fl" style="left:1060px;width:122px;text-align:right;top:188px">Gestionnaire</div>
<div class="fl" style="left:1198px;top:188px">U1</div>
<div class="q" style="left:1291px;top:187px">?</div>
<div class="fl" style="left:1311px;top:188px">Site de production 1</div>
<div class="fl" style="left:1060px;width:122px;text-align:right;top:207px">Statut Lct.</div>
<div class="fl" style="left:1198px;top:207px">0</div>
<div class="fl" style="left:1290px;top:207px">En-Cours</div>
<div class="fl" style="left:1060px;width:122px;text-align:right;top:226px">Statut OF</div>
<div class="fl" style="left:1198px;top:226px">0</div>
<div class="fl" style="left:1290px;top:226px">En-Cours</div>
<div class="fl" style="left:1060px;width:122px;text-align:right;top:245px">Règle Stock</div>
<div class="fl" style="left:1198px;top:245px">01-ArtCde</div>
<div class="q" style="left:1291px;top:244px">?</div>
<div class="fl" style="left:1311px;top:245px">Fabrication d'un article à la commande sur site</div>
<div class="fl" style="left:1060px;width:122px;text-align:right;top:264px">Sec.Sor.Csa.</div>
<div class="fl" style="left:1198px;top:264px">01-FAB</div>
<div class="fl" style="left:1290px;top:264px">Zone Atelier</div>
<div class="fl" style="left:1060px;width:122px;text-align:right;top:283px">Mvt.Sor.Csa.</div>
<div class="fl" style="left:1060px;width:122px;text-align:right;top:302px">Sec.Ent.OF</div>
<div class="fl" style="left:1198px;top:302px">01-EXP</div>
<div class="fl" style="left:1290px;top:302px">Produits Finis</div>
<div class="fl" style="left:1060px;width:122px;text-align:right;top:321px">Mvt.Ent.OF</div>
<div class="fl" style="left:1060px;width:122px;text-align:right;top:340px">Sec.Des.OF</div>
<div class="fl" style="left:1060px;width:122px;text-align:right;top:359px">Mvt.Desti.OF</div>
<div class="fl" style="left:1060px;width:122px;text-align:right;top:378px">PSD Glob.Int.</div>
<div class="q" style="left:1291px;top:377px">?</div>
<div class="fl" style="left:1060px;width:122px;text-align:right;top:397px">PSD Glob.Aut.</div>
<div class="q" style="left:1291px;top:396px">?</div>
<div class="fl" style="left:1060px;width:122px;text-align:right;top:416px">PSD Loc.Int.</div>
<div class="q" style="left:1291px;top:415px">?</div>
<div class="fl" style="left:1060px;width:122px;text-align:right;top:435px">PSD Loc.Aut.</div>
<div class="q" style="left:1291px;top:434px">?</div>
<div class="fl" style="left:1060px;width:122px;text-align:right;top:454px">Trs.Sor.Lct.</div>
<div class="q" style="left:1291px;top:453px">?</div>
<div class="fl" style="left:1060px;width:122px;text-align:right;top:473px">Trs.Sor.Fab.</div>
<div class="q" style="left:1291px;top:472px">?</div>
<div class="fl" style="left:1060px;width:122px;text-align:right;top:492px">Scénario Déc.</div>
<div class="q" style="left:1291px;top:491px">?</div>
<div class="fl" style="left:1060px;width:119px;text-align:right;top:511px">Doc.Dec.Fab</div>
<div class="fl" style="left:1198px;top:511px">FabDecFab</div>
<div class="q" style="left:1291px;top:510px">?</div>
<div class="fl" style="left:1311px;top:511px">Déclaration fin de fabrication</div>
<div class="fl" style="left:1060px;width:122px;text-align:right;top:530px">Type Ordre</div>
<div class="q" style="left:1291px;top:529px">?</div>
<div class="abs" style="left:461px;top:123px;width:253px;height:478px;background:#f2f2f2;border:1px solid #c8c8c8;border-bottom:none"></div>
<div class="mi" style="top:129px">Création (F9)</div>
<div class="mi" style="top:151px">Modification (F1)</div>
<div class="mi d" style="top:173px">Duplication (F7)</div>
<div class="mi" style="top:195px">Détail (F8)</div>
<div class="mi" style="top:217px">Consultation Inf. Techniques</div>
<div class="mi d" style="top:239px">Historique (F10)</div>
<div class="mi d" style="top:261px">Eléments Récents (Maj+F8)</div>
<div class="mi" style="top:283px">Historique Messages / Entité</div>
<div class="mi d" style="top:305px">Envoyer un message</div>
<div class="sep" style="top:327px"></div>
<div class="mi" style="top:334px">Nouvelle Tâche</div>
<div class="mi d" style="top:356px">Tâches de l'Entité</div>
<div class="sep" style="top:378px"></div>
<div class="mi" style="top:385px">Joindre un document</div>
<div class="mi" style="top:407px">Documents GED</div>
<div class="sep" style="top:429px"></div>
<div class="mi" style="top:436px">Accès à</div>
<svg class="abs" style="left:696px;top:439px" width="6" height="9"><path d="M1 0.5 L5 4.5 L1 8.5" stroke="#333" stroke-width="1.1" fill="none"/></svg>
<div class="sep" style="top:458px"></div>
<div class="mi" style="top:465px">Lancement Atelier</div>
<svg class="abs" style="left:696px;top:468px" width="6" height="9"><path d="M1 0.5 L5 4.5 L1 8.5" stroke="#333" stroke-width="1.1" fill="none"/></svg>
<div class="sep" style="top:487px"></div>
<div class="mi" style="top:494px">Déclaration de Fabrication</div>
<svg class="abs" style="left:696px;top:497px" width="6" height="9"><path d="M1 0.5 L5 4.5 L1 8.5" stroke="#333" stroke-width="1.1" fill="none"/></svg>
<div class="mi" style="top:516px">His. Déclarations / OF</div>
<div class="mi" style="top:538px">Valorisation CRV</div>
<div class="sep" style="top:560px"></div>
<div class="abs" style="left:464px;top:564px;width:247px;height:22px;background:#91c8f6"></div>
<div class="abs" style="left:483px;top:563px;width:148px;height:23px;background:#92c731;border-top:1px solid #f0f000"></div>
<div class="mi" style="top:567px">Informations Suivie</div>
<div class="sep" style="top:589px"></div>
<div class="mi" style="top:596px">Déclaration Co-Produits</div>
<svg class="abs" style="left:597px;top:565px" width="14" height="22"><path d="M1.2 1 L1.2 17 L4.8 13.6 L7.8 19.8 L10.4 18.8 L7.6 12.6 L12.4 12.6 Z" fill="#ffff20" stroke="#000" stroke-width="1"/></svg>
</body></html>
